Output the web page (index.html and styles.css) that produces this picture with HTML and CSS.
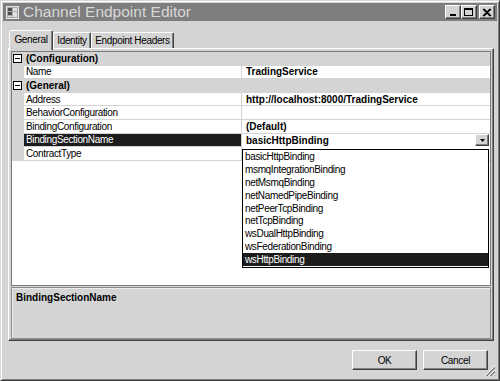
FILE: index.html
```html
<!DOCTYPE html>
<html>
<head>
<meta charset="utf-8">
<link rel="stylesheet" href="styles.css">
</head>
<body>
<div class="window">
  <div class="titlebar">
    <svg class="app-icon" width="13" height="13" viewBox="0 0 13 13">
      <rect x="0.5" y="0.5" width="12" height="12" fill="#a8a8a8" stroke="#e6e6e6"/>
      <rect x="2" y="2" width="4" height="3" fill="#505050"/>
      <rect x="2" y="6" width="4" height="3" fill="#505050"/>
      <rect x="7" y="2" width="4" height="3" fill="#e0e0e0"/>
      <rect x="7" y="6" width="4" height="5" fill="#e0e0e0"/>
      <rect x="2" y="10" width="4" height="1" fill="#e0e0e0"/>
    </svg>
    <span class="title">Channel Endpoint Editor</span>
    <div class="caption-buttons">
      <div class="cap"><svg width="10" height="9" viewBox="0 0 10 9"><rect x="2" y="6" width="6" height="2" fill="#000"/></svg></div>
      <div class="cap"><svg width="10" height="9" viewBox="0 0 10 9"><rect x="0.5" y="0.5" width="8" height="7" fill="none" stroke="#000"/><rect x="1" y="1" width="7" height="1" fill="#000"/></svg></div>
      <div class="cap close"><svg width="10" height="9" viewBox="0 0 10 9"><path d="M1 1 L8 8 M2 1 L9 8 M8 1 L1 8 M9 1 L2 8" stroke="#000" stroke-width="1.1"/></svg></div>
    </div>
  </div>
  <div class="body">
    <div class="tabs">
      <div class="tab active w-general">General</div>
      <div class="tab w-identity">Identity</div>
      <div class="tab w-headers">Endpoint Headers</div>
    </div>
    <div class="panel">
      <div class="grid">
        <div class="margin"><span class="toggle"></span></div>
        <div class="cat-label">(Configuration)</div>
        <div class="margin"></div>
        <div class="name">Name</div>
        <div class="value">TradingService</div>
        <div class="margin"><span class="toggle"></span></div>
        <div class="cat-label">(General)</div>
        <div class="margin"></div>
        <div class="name">Address</div>
        <div class="value">http://localhost:8000/TradingService</div>
        <div class="margin"></div>
        <div class="name">BehaviorConfiguration</div>
        <div class="value"></div>
        <div class="margin"></div>
        <div class="name">BindingConfiguration</div>
        <div class="value">(Default)</div>
        <div class="margin"></div>
        <div class="name selected">BindingSectionName</div>
        <div class="value editing"><span>basicHttpBinding</span><span class="drop-btn"><svg width="5" height="3" viewBox="0 0 5 3"><path d="M0 0 H5 L2.5 3 Z" fill="#000"/></svg></span></div>
        <div class="margin"></div>
        <div class="name">ContractType</div>
        <div class="value"></div>

        <div class="droplist">
          <div class="item">basicHttpBinding</div>
          <div class="item">msmqIntegrationBinding</div>
          <div class="item">netMsmqBinding</div>
          <div class="item">netNamedPipeBinding</div>
          <div class="item">netPeerTcpBinding</div>
          <div class="item">netTcpBinding</div>
          <div class="item">wsDualHttpBinding</div>
          <div class="item">wsFederationBinding</div>
          <div class="item hot">wsHttpBinding</div>
        </div>
      </div>
      <div class="desc">BindingSectionName</div>
    </div>
    <div class="footer">
      <div class="btn">OK</div>
      <div class="btn">Cancel</div>
    </div>
  </div>
  <svg class="grip" width="12" height="12" viewBox="0 0 12 12">
    <path d="M11 1 L1 11 M11 5 L5 11 M11 9 L9 11" stroke="#fff" stroke-width="1"/>
    <path d="M11 2 L2 11 M11 3 L3 11 M11 6 L6 11 M11 7 L7 11 M11 10 L10 11" stroke="#808080" stroke-width="1"/>
  </svg>
</div>
</body>
</html>
```

FILE: styles.css
```css
* { box-sizing: border-box; }
html, body { margin: 0; padding: 0; }
body {
  width: 500px;
  height: 381px;
  overflow: hidden;
  background: #d4d4d4;
  font-family: "Liberation Sans", Arial, sans-serif;
  font-size: 10px;
  letter-spacing: -0.35px;
  color: #000;
}
.window {
  position: relative;
  width: 500px;
  height: 381px;
  display: flex;
  flex-direction: column;
  background: #d4d4d4;
  border: 1px solid;
  border-color: #d8d8d8 #3c3c3c #3c3c3c #d8d8d8;
  padding: 2px;
  box-shadow: inset 1px 1px #fff, inset -1px -1px #808080;
}
.titlebar {
  height: 18px;
  flex: 0 0 18px;
  background: #7e7e7e;
  display: flex;
  align-items: center;
  padding: 0 2px 0 3px;
}
.app-icon { flex: 0 0 13px; margin-right: 4px; }
.title {
  font-size: 15.5px;
  letter-spacing: 0;
  color: #d8d8d8;
  white-space: nowrap;
  line-height: 18px;
}
.caption-buttons { margin-left: auto; display: flex; }
.cap {
  width: 16px;
  height: 14px;
  background: #d4d4d4;
  border: 1px solid;
  border-color: #fff #404040 #404040 #fff;
  box-shadow: inset -1px -1px #808080;
  display: flex;
  align-items: center;
  justify-content: center;
}
.cap.close { margin-left: 2px; }
.body {
  flex: 1;
  display: flex;
  flex-direction: column;
  padding: 9px 0 0 5px;
}
.tabs {
  display: flex;
  align-items: flex-end;
  height: 18px;
  padding-left: 1px;
  position: relative;
  z-index: 2;
}
.tab {
  height: 16px;
  border: 1px solid;
  border-bottom: none;
  border-color: #fff #404040 transparent #fff;
  box-shadow: inset -1px 0 #808080;
  display: flex;
  align-items: center;
  justify-content: center;
  white-space: nowrap;
  border-radius: 2px 2px 0 0;
  padding-bottom: 1px;
}
.tab.active {
  height: 20px;
  margin-bottom: -2px;
  background: #d4d4d4;
  padding-bottom: 3px;
}
.w-general { width: 44px; }
.w-identity { width: 38px; }
.w-headers { width: 83px; }
.panel {
  width: 486px;
  height: 293px;
  flex: 0 0 293px;
  border: 1px solid;
  border-color: #fff #404040 #404040 #fff;
  box-shadow: inset -1px -1px #808080;
  padding: 2px;
  display: flex;
  flex-direction: column;
  position: relative;
  z-index: 1;
}
.grid {
  position: relative;
  flex: 0 0 235px;
  background: #fff;
  border: 1px solid #7a7a7a;
  display: grid;
  grid-template-columns: 12px 218px 1fr;
  grid-auto-rows: 13.6px;
  align-content: start;
}
.margin {
  background: #d4d4d4;
  display: flex;
  align-items: center;
  padding-left: 1px;
}
.toggle {
  width: 9px;
  height: 9px;
  border: 1px solid #000;
  background: #fff;
  position: relative;
}
.toggle::after {
  content: "";
  position: absolute;
  left: 1px;
  top: 3px;
  width: 5px;
  height: 1px;
  background: #000;
}
.cat-label {
  grid-column: 2 / 4;
  background: #d4d4d4;
  font-weight: bold;
  letter-spacing: 0;
  display: flex;
  align-items: center;
  padding-left: 2px;
}
.name {
  display: flex;
  align-items: center;
  padding-left: 2px;
  border-bottom: 1px solid #d4d4d4;
  border-right: 1px solid #d4d4d4;
  white-space: nowrap;
}
.name.selected {
  background: #1c1c1c;
  color: #fff;
}
.value {
  display: flex;
  align-items: center;
  padding-left: 4px;
  border-bottom: 1px solid #d4d4d4;
  font-weight: bold;
  letter-spacing: 0;
  white-space: nowrap;
}
.value.editing {
  justify-content: space-between;
  padding-right: 1px;
  border-bottom: none;
}
.drop-btn {
  width: 14px;
  height: 12px;
  background: #d4d4d4;
  border: 1px solid;
  border-color: #fff #404040 #404040 #fff;
  box-shadow: inset -1px -1px #808080;
  display: flex;
  align-items: center;
  justify-content: center;
}
.droplist {
  position: absolute;
  left: 230px;
  top: 97px;
  width: 247px;
  height: 119px;
  background: #fff;
  border: 1px solid #000;
  z-index: 3;
}
.item {
  height: 12.9px;
  display: flex;
  align-items: center;
  padding-left: 2px;
  white-space: nowrap;
}
.item.hot {
  background: #1c1c1c;
  color: #fff;
}
.desc {
  flex: 0 0 52px;
  margin-top: 1px;
  border: 1px solid #8a8a8a;
  box-shadow: inset 1px 1px #ececec;
  padding: 4px 4px;
  font-weight: bold;
  letter-spacing: 0;
}
.footer {
  display: flex;
  justify-content: flex-end;
  gap: 6px;
  margin-top: 9px;
  padding-right: 9px;
}
.btn {
  width: 65px;
  height: 20px;
  background: #d4d4d4;
  border: 1px solid;
  border-color: #fff #404040 #404040 #fff;
  box-shadow: inset -1px -1px #808080;
  display: flex;
  align-items: center;
  justify-content: center;
}
.grip {
  position: absolute;
  right: 3px;
  bottom: 3px;
}
```
